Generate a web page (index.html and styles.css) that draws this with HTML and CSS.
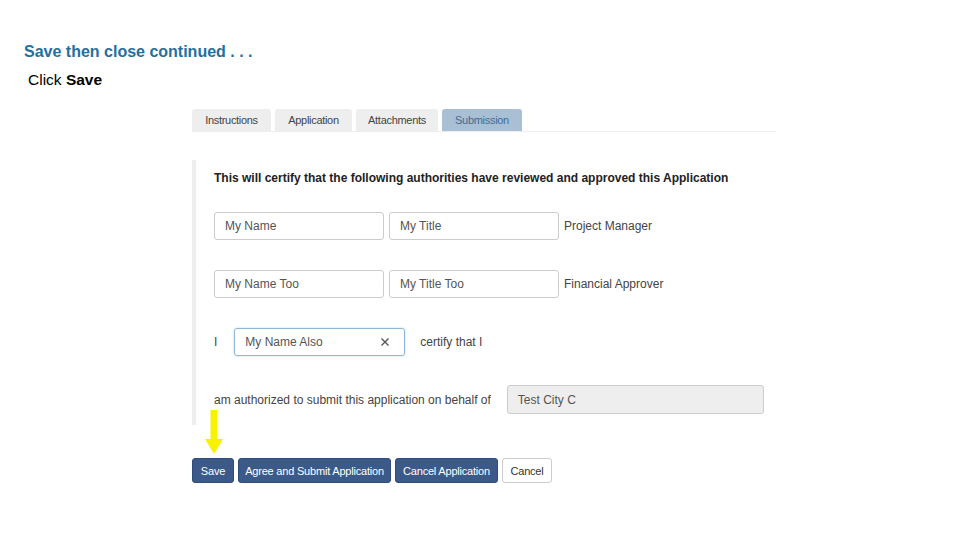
FILE: index.html
```html
<!DOCTYPE html>
<html lang="en">
<head>
    <meta charset="UTF-8">
    <meta name="viewport" content="width=device-width, initial-scale=1.0">
    <title>Save then close continued</title>
    <link rel="stylesheet" href="styles.css">
</head>
<body>
    <div class="slide">
        <h1 class="slide-title">Save then close continued . . .</h1>
        <p class="slide-note">Click <b>Save</b></p>

        <div class="shot">
            <div class="tabs">
                <div class="tab tab-instructions">Instructions</div>
                <div class="tab tab-application">Application</div>
                <div class="tab tab-attachments">Attachments</div>
                <div class="tab tab-submission active">Submission</div>
            </div>

            <div class="panel">
                <div class="panel-heading">This will certify that the following authorities have reviewed and approved this Application</div>

                <div class="row">
                    <div class="field">My Name</div>
                    <div class="field">My Title</div>
                    <span class="row-label">Project Manager</span>
                </div>

                <div class="row">
                    <div class="field">My Name Too</div>
                    <div class="field">My Title Too</div>
                    <span class="row-label">Financial Approver</span>
                </div>

                <div class="row row-wide">
                    <span class="row-text">I</span>
                    <div class="field field-focus">
                        <span>My Name Also</span>
                        <svg class="clear" viewBox="0 0 10 10" fill="none" stroke="#555" stroke-width="1.4">
                            <path d="M1.5 1.5l7 7M8.5 1.5l-7 7"/>
                        </svg>
                    </div>
                    <span class="row-text certify">certify that I</span>
                </div>

                <div class="row row-wide">
                    <span class="row-text">am authorized to submit this application on behalf of</span>
                    <div class="field field-disabled">Test City C</div>
                </div>
            </div>

            <div class="actions">
                <button class="btn btn-primary btn-save">Save</button>
                <button class="btn btn-primary btn-agree">Agree and Submit Application</button>
                <button class="btn btn-primary btn-cancel-app">Cancel Application</button>
                <button class="btn btn-default">Cancel</button>
            </div>

            <!-- pointer to the Save button -->
            <svg class="arrow" viewBox="0 0 18 44">
                <path d="M5.5 0h7v29h5.5L9 44 0 29h5.5z" fill="#f7f300"/>
            </svg>
        </div>
    </div>
</body>
</html>
```

FILE: styles.css
```css
* {
    margin: 0;
    padding: 0;
    box-sizing: border-box;
}

body {
    background: #ffffff;
    font-family: "Liberation Sans", Arial, sans-serif;
    color: #000;
}

.slide {
    width: 960px;
    height: 540px;
    padding: 43px 0 0 24px;
}

.slide-title {
    font-size: 16px;
    font-weight: bold;
    color: #23709f;
    line-height: 18px;
}

.slide-note {
    font-size: 15.5px;
    line-height: 18px;
    margin: 10px 0 0 4px;
}

.slide-note b {
    font-weight: bold;
}

.shot {
    position: relative;
    width: 584px;
    margin: 20px 0 0 168px;
}

.tabs {
    display: flex;
    gap: 4px;
    border-bottom: 1px solid #eeeeee;
}

.tab {
    height: 22px;
    line-height: 22px;
    font-size: 11px;
    color: #444;
    text-align: center;
    background: #eeeeee;
    border-radius: 3px 3px 0 0;
    letter-spacing: -0.3px;
}

.tab-instructions { width: 79px; }
.tab-application { width: 77px; }
.tab-attachments { width: 82px; }
.tab-submission { width: 80px; }

.tab.active {
    background: #a9bfd4;
    color: #3f6c95;
}

.panel {
    margin-top: 28px;
    border-left: 4px solid #eeeeee;
    padding: 11px 0 11px 18px;
}

.panel-heading {
    font-size: 12px;
    font-weight: bold;
    color: #222;
    line-height: 14px;
    margin-bottom: 27px;
}

.row {
    display: flex;
    align-items: center;
    gap: 5px;
    margin-bottom: 30px;
}

.row:last-child {
    margin-bottom: 0;
}

.row-wide {
    gap: 17px;
    margin-bottom: 29px;
}

.field {
    width: 170px;
    height: 28px;
    border: 1px solid #cccccc;
    border-radius: 3px;
    padding: 0 10px;
    font-size: 12px;
    color: #555;
    display: flex;
    align-items: center;
}

.field-focus {
    width: 171px;
    justify-content: space-between;
    border-color: #8fb6d9;
    box-shadow: 0 0 2px rgba(102, 175, 233, 0.5);
}

.clear {
    width: 10px;
    height: 10px;
    margin-right: 4px;
}

.field-disabled {
    width: 257px;
    height: 29px;
    background: #eeeeee;
    margin-left: -1px;
}

.row-label,
.row-text {
    font-size: 12px;
    color: #444;
}

.certify {
    margin-left: -2px;
}

.actions {
    display: flex;
    gap: 4px;
    margin-top: 33px;
}

.btn {
    height: 25px;
    font-family: "Liberation Sans", Arial, sans-serif;
    font-size: 11px;
    border-radius: 3px;
    letter-spacing: -0.2px;
    cursor: pointer;
}

.btn-primary {
    background: #3b5a8a;
    border: 1px solid #2f4d7a;
    color: #ffffff;
}

.btn-save { width: 42px; }
.btn-agree { width: 153px; }
.btn-cancel-app { width: 103px; }

.btn-default {
    width: 50px;
    background: #ffffff;
    border: 1px solid #cccccc;
    color: #333;
}

.arrow {
    position: absolute;
    left: 13px;
    top: 301px;
    width: 18px;
    height: 44px;
}
```
